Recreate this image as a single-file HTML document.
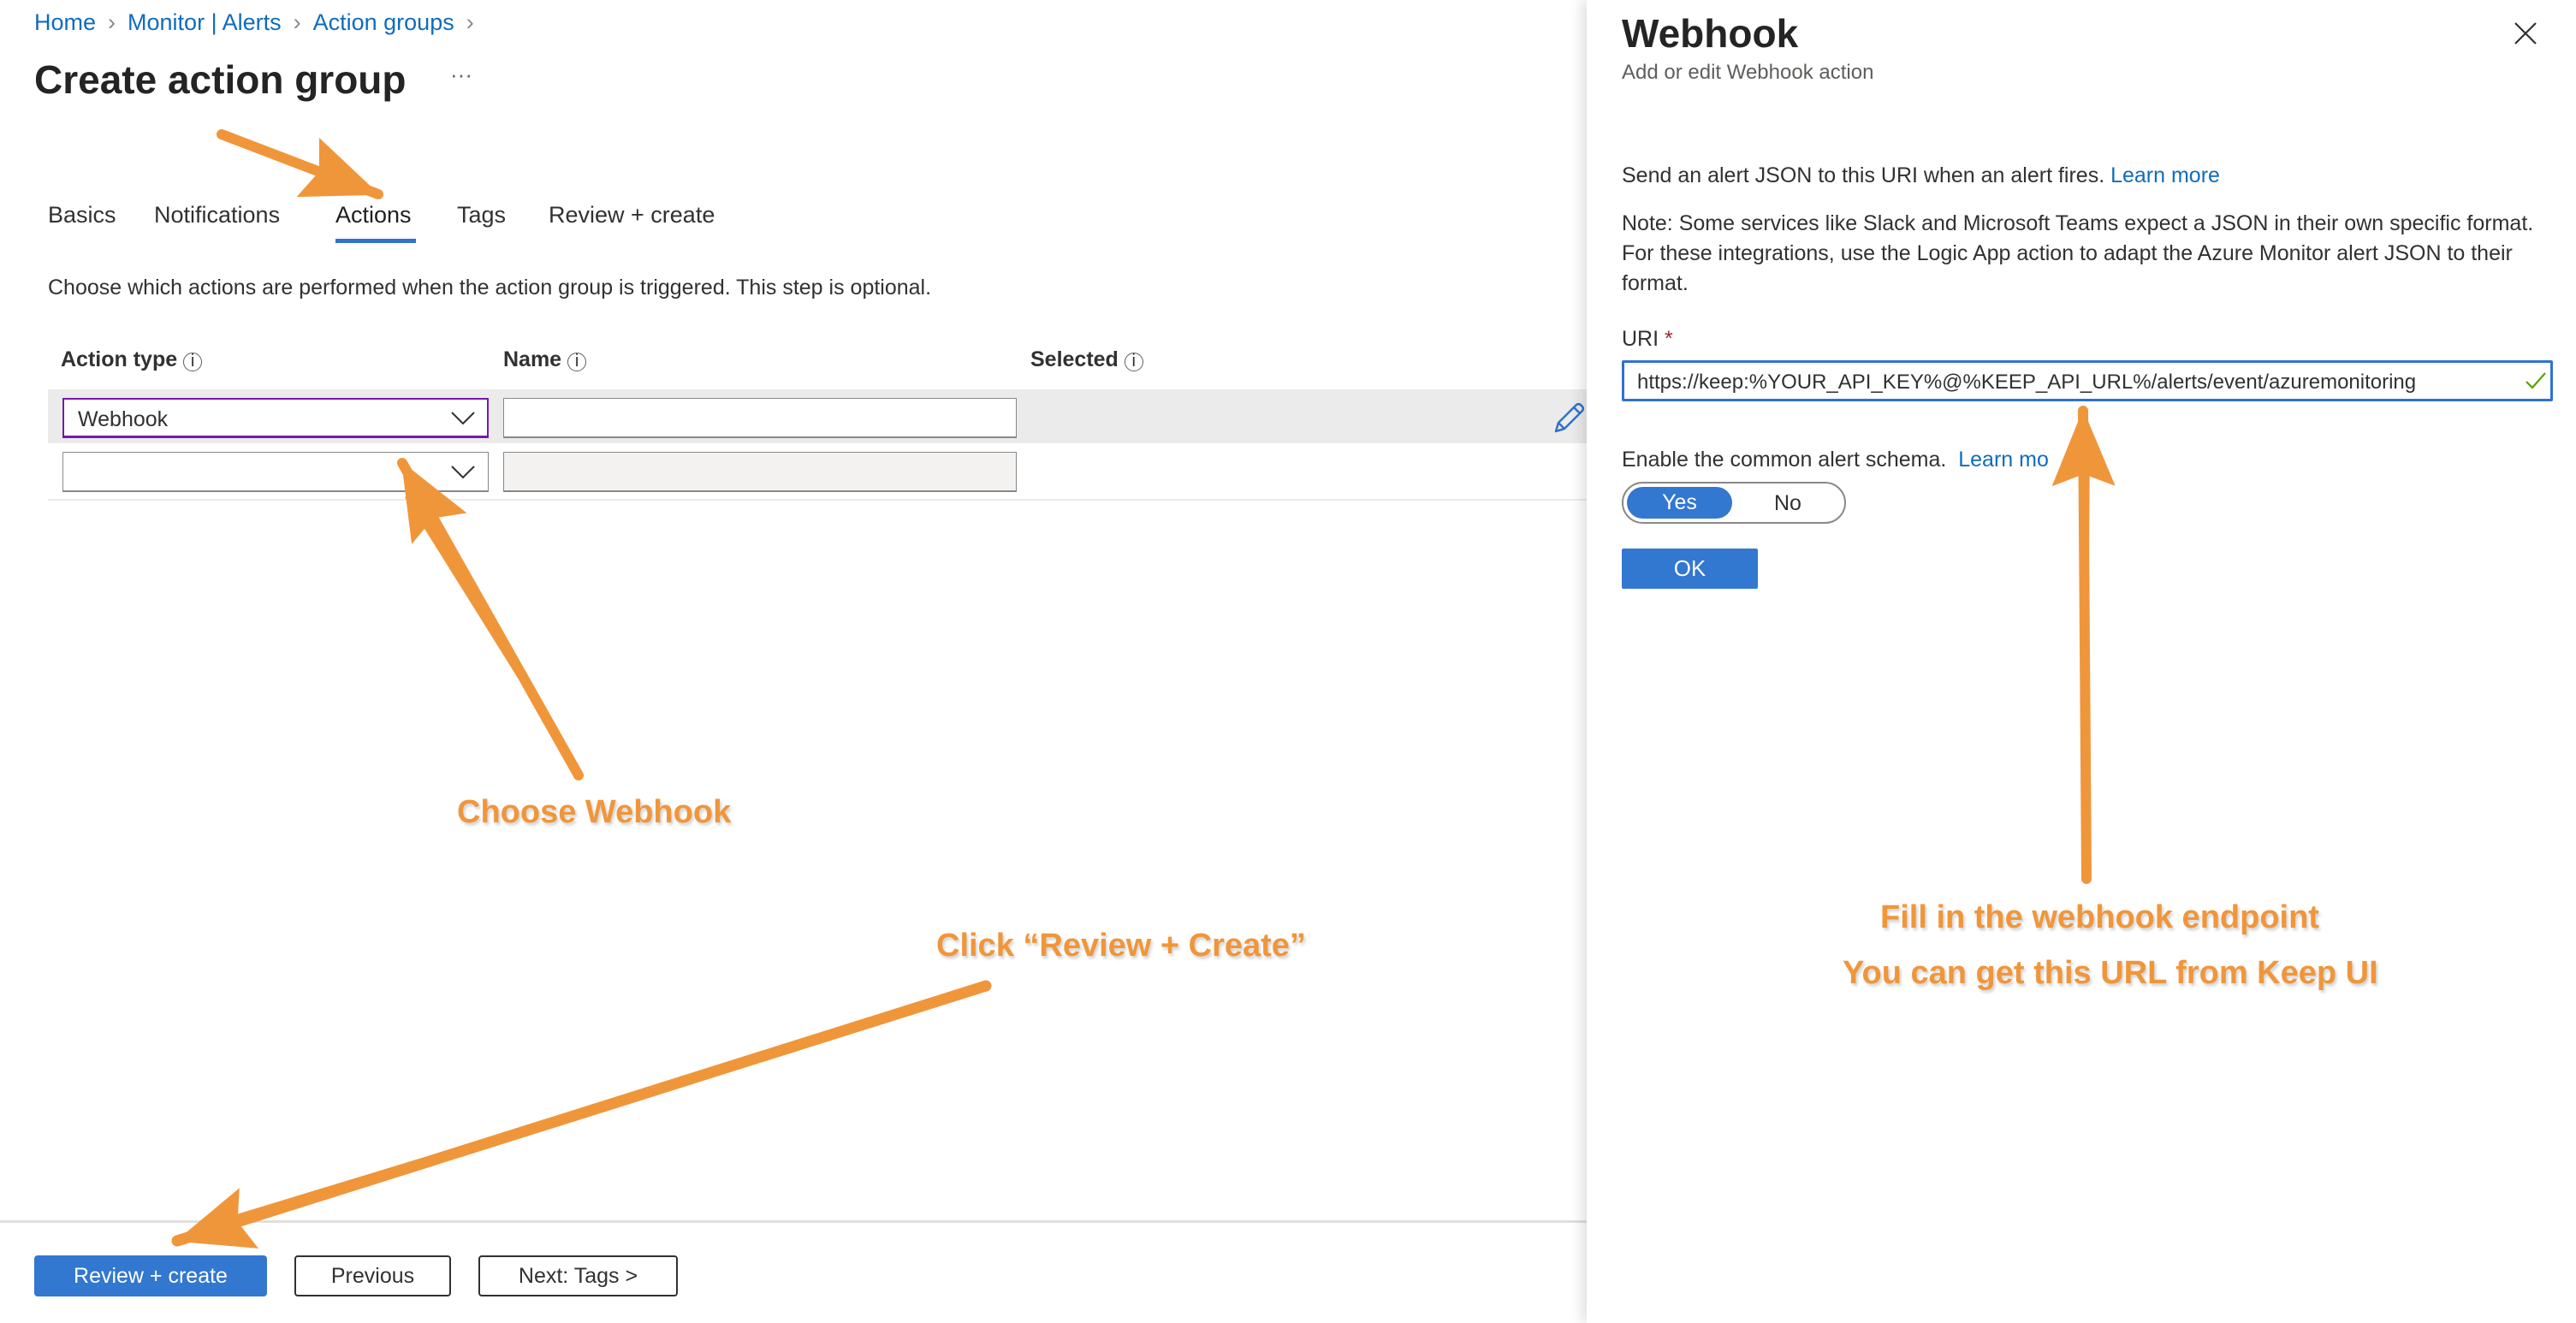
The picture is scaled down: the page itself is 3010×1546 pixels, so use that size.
<!DOCTYPE html>
<html><head><meta charset="utf-8"><style>
*{margin:0;padding:0;box-sizing:border-box}
body{width:3010px;height:1546px;background:#fff;font-family:"Liberation Sans",sans-serif;color:#323130;position:relative;overflow:hidden}
.a{position:absolute;white-space:nowrap}
.link{color:#0f6cbd}
.btn{position:absolute;border:2px solid #323130;border-radius:4px;font-size:25px;display:flex;align-items:center;justify-content:center;background:#fff}
.ann{position:absolute;white-space:nowrap;color:#F0963A;font-weight:bold;font-size:38px;text-shadow:2px 3px 3px rgba(0,0,0,.18)}
.sep{color:#8a8886;margin:0 14px}
</style></head><body>
<div class="a" style="left:40px;top:11px;font-size:27px"><span class="link">Home</span><span class="sep">›</span><span class="link">Monitor | Alerts</span><span class="sep">›</span><span class="link">Action groups</span><span class="sep">›</span></div>
<div class="a" style="left:40px;top:66px;font-size:46px;font-weight:bold;color:#242424">Create action group</div>
<div class="a" style="left:526px;top:72px;font-size:26px;color:#605e5c">···</div>
<div class="a" style="left:56px;top:236px;font-size:27px">Basics</div>
<div class="a" style="left:180px;top:236px;font-size:27px">Notifications</div>
<div class="a" style="left:392px;top:236px;font-size:27px;color:#201f1e">Actions</div>
<div class="a" style="left:392px;top:279px;width:94px;height:5px;background:#2f72d0"></div>
<div class="a" style="left:534px;top:236px;font-size:27px">Tags</div>
<div class="a" style="left:641px;top:236px;font-size:27px">Review + create</div>
<div class="a" style="left:56px;top:322px;font-size:25px">Choose which actions are performed when the action group is triggered. This step is optional.</div>
<div class="a" style="left:71px;top:406px;font-size:25px;font-weight:bold">Action type <span style="font-weight:normal;font-size:20px;border:1.5px solid #605e5c;border-radius:50%;display:inline-block;width:22px;height:22px;line-height:19px;text-align:center">i</span></div>
<div class="a" style="left:588px;top:406px;font-size:25px;font-weight:bold">Name <span style="font-weight:normal;font-size:20px;border:1.5px solid #605e5c;border-radius:50%;display:inline-block;width:22px;height:22px;line-height:19px;text-align:center">i</span></div>
<div class="a" style="left:1204px;top:406px;font-size:25px;font-weight:bold">Selected <span style="font-weight:normal;font-size:20px;border:1.5px solid #605e5c;border-radius:50%;display:inline-block;width:22px;height:22px;line-height:19px;text-align:center">i</span></div>
<div class="a" style="left:56px;top:455px;width:1798px;height:63px;background:#ebebeb"></div>
<div class="a" style="left:73px;top:465px;width:498px;height:47px;background:#fff;border:2px solid #7719aa;border-bottom-width:3px;font-size:25px;padding:9px 0 0 16px">Webhook</div>
<div class="a" style="left:588px;top:465px;width:600px;height:47px;background:#fff;border:1px solid #8a8886;border-bottom:2px solid #8a8886"></div>
<div class="a" style="left:73px;top:528px;width:498px;height:47px;background:#fff;border:1px solid #8a8886;border-bottom:2px solid #8a8886"></div>
<div class="a" style="left:588px;top:528px;width:600px;height:47px;background:#f3f2f1;border:1px solid #8a8886;border-bottom:2px solid #8a8886"></div>
<div class="a" style="left:56px;top:583px;width:1798px;height:2px;background:#edebe9"></div>
<svg class="a" style="left:525px;top:476px" width="32" height="24"><path d="M3 6 L16 19 L29 6" fill="none" stroke="#323130" stroke-width="2"/></svg>
<svg class="a" style="left:525px;top:539px" width="32" height="24"><path d="M3 6 L16 19 L29 6" fill="none" stroke="#323130" stroke-width="2"/></svg>
<svg class="a" style="left:1814px;top:470px" width="38" height="38"><path d="M4 34 L7 24 L28 3 Q31 1 34 4 Q37 7 35 10 L14 31 Z M7 24 L14 31 M25 6 L32 13" fill="none" stroke="#2f72d0" stroke-width="2.5" stroke-linejoin="round"/></svg>
<div class="a" style="left:0;top:1426px;width:1854px;height:3px;background:#e1dfdd"></div>
<div class="btn" style="left:40px;top:1467px;width:272px;height:48px;background:#3277d0;border:none;color:#fff">Review + create</div>
<div class="btn" style="left:344px;top:1467px;width:183px;height:48px">Previous</div>
<div class="btn" style="left:559px;top:1467px;width:233px;height:48px">Next: Tags &gt;</div>
<div class="a" style="left:1854px;top:0;width:1156px;height:1546px;background:#fff;box-shadow:-6px 0 14px rgba(0,0,0,.12)"></div>
<div class="a" style="left:1895px;top:12px;font-size:46px;font-weight:bold;color:#242424">Webhook</div>
<div class="a" style="left:1895px;top:71px;font-size:24px;color:#605e5c">Add or edit Webhook action</div>
<svg class="a" style="left:2936px;top:24px" width="30" height="30"><path d="M3 3 L27 27 M27 3 L3 27" stroke="#323130" stroke-width="2.2"/></svg>
<div class="a" style="left:1895px;top:191px;font-size:25px">Send an alert JSON to this URI when an alert fires. <span class="link">Learn more</span></div>
<div class="a" style="left:1895px;top:244px;font-size:25px;line-height:35px;white-space:normal;width:1100px">Note: Some services like Slack and Microsoft Teams expect a JSON in their own specific format. For these integrations, use the Logic App action to adapt the Azure Monitor alert JSON to their format.</div>
<div class="a" style="left:1895px;top:382px;font-size:25px">URI <span style="color:#a4262c">*</span></div>
<div class="a" style="left:1895px;top:421px;width:1088px;height:48px;border:3px solid #2f72d0;border-radius:2px;font-size:24px;padding:9px 0 0 15px">https://keep:%YOUR_API_KEY%@%KEEP_API_URL%/alerts/event/azuremonitoring</div>
<svg class="a" style="left:2950px;top:432px" width="26" height="26"><path d="M2 14 L9 21 L24 4" fill="none" stroke="#57a300" stroke-width="2.2"/></svg>
<div class="a" style="left:1895px;top:523px;font-size:25px">Enable the common alert schema.&nbsp; <span class="link">Learn mo</span></div>
<div class="a" style="left:1895px;top:563px;width:262px;height:49px;border:2px solid #8a8886;border-radius:25px"></div>
<div class="a" style="left:1901px;top:569px;width:123px;height:37px;background:#3277d0;border-radius:19px;color:#fff;font-size:25px;text-align:center;line-height:37px">Yes</div>
<div class="a" style="left:2073px;top:574px;font-size:25px">No</div>
<div class="a" style="left:1895px;top:641px;width:159px;height:47px;background:#3277d0;border-radius:2px;color:#fff;font-size:26px;text-align:center;line-height:47px">OK</div>
<svg class="a" style="left:0;top:0" width="3010" height="1546">
<defs><marker id="h" markerUnits="userSpaceOnUse" markerWidth="100" markerHeight="90" refX="88" refY="45" orient="auto"><path d="M0 8 L90 45 L0 82 L14 45 Z" fill="#F0963A"/></marker></defs>
<g stroke="#F0963A" stroke-linecap="round" fill="none">
<line x1="259" y1="157" x2="442" y2="227" stroke-width="12" marker-end="url(#h)"/>
<line x1="676" y1="906" x2="470" y2="541" stroke-width="12" marker-end="url(#h)"/>
<line x1="1152" y1="1152" x2="207" y2="1450" stroke-width="13" marker-end="url(#h)"/>
<line x1="2438" y1="1027" x2="2434" y2="480" stroke-width="12" marker-end="url(#h)"/>
</g>
<g fill="#F0963A">
<polygon points="259,157 400,205 394,216"/>
<polygon points="676,906 485,575 473,581"/>
<polygon points="1152,1152 260,1424 266,1438"/>
<polygon points="2438,1027 2428,520 2442,520"/>
</g></svg>
<div class="ann" style="left:534px;top:928px">Choose Webhook</div>
<div class="ann" style="left:1094px;top:1084px">Click “Review + Create”</div>
<div class="ann" style="left:2197px;top:1051px">Fill in the webhook endpoint</div>
<div class="ann" style="left:2153px;top:1116px">You can get this URL from Keep UI</div>
</body></html>
